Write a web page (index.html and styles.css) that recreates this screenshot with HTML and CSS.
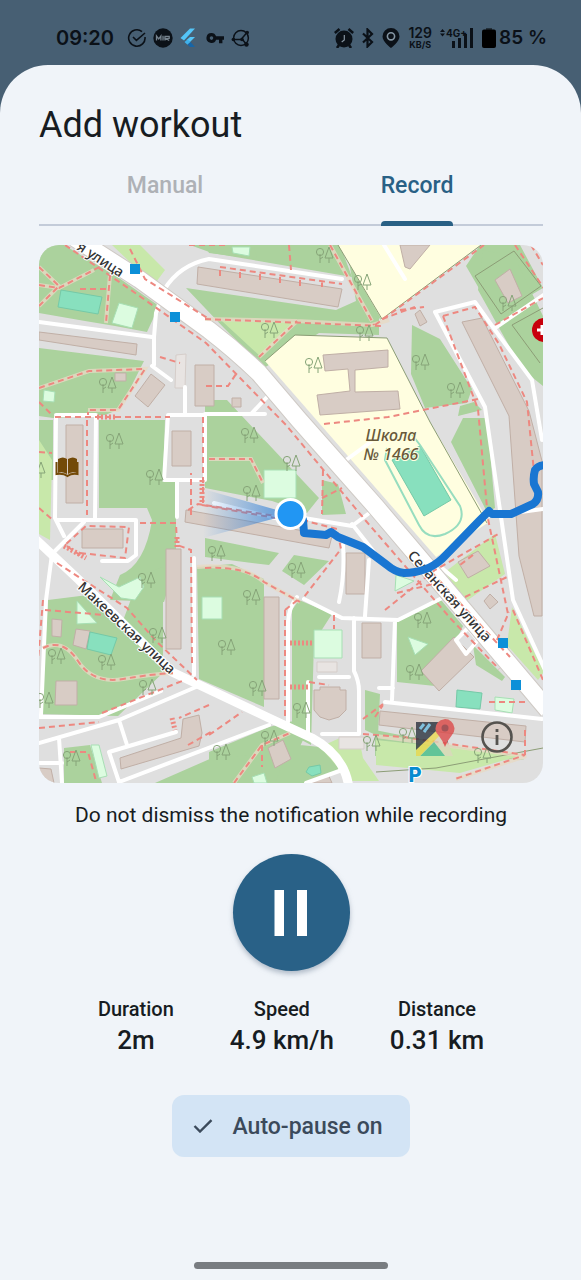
FILE: index.html
```html
<!DOCTYPE html>
<html lang="en">
<head>
<meta charset="utf-8">
<meta name="viewport" content="width=device-width, initial-scale=1">
<title>Add workout</title>
<link rel="stylesheet" href="styles.css">
</head>
<body>
<div class="screen">
  <header class="status">
    <div class="status-left">
      <span class="clock">09:20</span>
      <svg class="ico" viewBox="0 0 20 20"><path d="M15 3.600A8.200 8.200 0 1 0 18 9M6 9l3.400 3.400L18 5" fill="none" stroke="#0b1118" stroke-width="1.600"/></svg>
      <svg class="ico" viewBox="0 0 20 20"><circle cx="10" cy="10" r="9.7" fill="#0b1118"/><path d="M3.500 12.500V8l2.200 3 2.200-3v4.500M10 7.700v4.800M12 12.500V8.300h4.200v2H12.500l3.700 2.200" fill="none" stroke="#75828d" stroke-width="1.300"/></svg>
      <svg class="ico" viewBox="0 0 20 20"><path d="M11 .5h5L5 12.500 1.500 10z" fill="#54c5f8"/><path d="M11 9h5l-5 5-3.500-2z" fill="#54c5f8"/><path d="M5.500 14l3-2.500 3 2.500-3 2.800z" fill="#3fb2ec"/><path d="M8.500 16.800l3-2.800 4.500 5h-5z" fill="#1765a6"/></svg>
      <svg class="ico" viewBox="0 0 20 20"><path fill="#0b1118" fill-rule="evenodd" d="M6.500 5a5 5 0 0 1 4.600 3.300H19v3.500h-1.600v3.400h-3.400v-3.400h-2.900A5 5 0 1 1 6.500 5zm0 3.300a1.800 1.800 0 1 0 0 3.600 1.800 1.800 0 0 0 0-3.600z"/></svg>
      <svg class="ico" viewBox="0 0 20 20"><g fill="none" stroke="#0b1118" stroke-width="1.500"><circle cx="10" cy="10" r="7.400"/><path d="M2 11.500h8l6-7M11 11l5 6"/></g><g fill="#0b1118"><circle cx="2.400" cy="11.500" r="1.800"/><circle cx="16.200" cy="4.500" r="1.800"/><circle cx="15.500" cy="16.500" r="2.200"/><circle cx="11" cy="11.500" r="1.800"/></g></svg>
    </div>
    <div class="status-right">
      <svg class="ico" viewBox="0 0 20 20"><circle cx="10" cy="11" r="8.500" fill="#0b1118"/><path d="M.8 5L5.500 1M19.200 5L14.500 1M5 17l-2 3M15 17l2 3" stroke="#0b1118" stroke-width="2.600"/><path d="M10.300 7v5l-2.600 2" fill="none" stroke="#8795a1" stroke-width="1.200"/></svg>
      <svg class="ico thin" viewBox="0 0 12 20"><path d="M1 5.500l9 8.500-4.500 4.500v-17L10 6l-9 8.500" fill="none" stroke="#0b1118" stroke-width="2.200"/></svg>
      <svg class="ico pin" viewBox="0 0 18 20"><path fill="#0b1118" d="M9 0a8.500 8.500 0 0 1 8.500 8.500C17.500 14 9 20 9 20S.5 14 .5 8.500A8.500 8.500 0 0 1 9 0z"/><circle cx="9" cy="8.300" r="3.600" fill="none" stroke="#8495a3" stroke-width="1.600"/></svg>
      <span class="rate"><b>129</b><span>KB/S</span></span>
      <span class="net"><span>4G+</span><svg viewBox="0 0 34 20"><path fill="#0b1118" d="M0 4l2.500-3L5 4zM0 5.500l2.500 3 2.500-3zM12 13h3v7h-3zM18 10h3v10h-3zM24 6h3v14h-3zM30 0h3v20h-3z"/></svg></span>
      <svg class="ico batt" viewBox="0 0 14 20"><path d="M4 0h6v2H4z" fill="#24303a"/><rect y="1.500" width="14" height="18.500" rx="2"/></svg>
      <span class="pct">85 %</span>
    </div>
  </header>

  <main class="sheet">
    <h1>Add workout</h1>
    <div class="tabs" role="tablist">
      <button class="tab" role="tab" aria-selected="false"><span>Manual</span></button>
      <button class="tab active" role="tab" aria-selected="true"><span>Record</span></button>
    </div>

    <section class="map" aria-label="Workout map">
      <svg class="map-art" viewBox="39 245 504 538" preserveAspectRatio="xMidYMid slice">
        <defs>
          <g id="trees" class="tree"><circle cx="-4" cy="-3" r="3.600"/><path d="M-4-1v9M-4 4l3-2M5-8L1 3h8zM5 3v5"/></g>
          <linearGradient id="beam"><stop offset="0" stop-color="#2f80d8" stop-opacity="0"/><stop offset="1" stop-color="#2f80d8" stop-opacity=".8"/></linearGradient>
        </defs>
        <path class="land" d="M39 245h504v538H39z"/>
        <g class="green">
          <path d="M39 245h25l55 33 40 28-12 26-32-6-30-5-46-8zM190 245h150l12 32-140-24zM39 348l105 13-24 48-15 6-52 3-14-2z"/>
          <path d="M205 245h49l3 14-48-6zM186 288l150 22 20-9-10-56h20l13 20v70l-60-2-55 35-40-40zM361 245h8l12 75-20-20zM520 245h-40l-14 21 29 50 48-28z"/>
          <path d="M39 420h14v60H39zM99 420h66l-2 60 13 2v80l-12 40-54-2 10-25q25-10 32-55l-5-12H99zM205 400h22l92 98-12 15-35-12-67-13zM322 480l16 4 8 30-24 1zM412 325l28 14 32 50-5 14-42 5-14-34z"/>
          <path d="M483 250l31 6 29 60v70l-20-16-20-35-25-45zM451 442l12-24 24 0 8 90-8 4zM460 406l14-4 8 8-24 6z"/>
          <path d="M205 538l74 15-10 12-64-8zM294 555l35 6-25 24-22-14zM197 567l35-3 32 15v128l-65-28zM299 600l33 14-18 28-3 103-19-10V610zM140 575l23-8v90l-42-31zM48 600l40-5 80 73-50 48-77-2zM64 748l26-3 12 38H64zM209 752l60-25 24-6 10 19-20 43H209zM300 745l30 3 15 19-30 16h-34z"/>
          <path d="M397 622l44-22 22 26-28 60-38-4zM473 645l32 32-3 4-26-16zM155 783l57-25 75-5-12 30zM375 730l150 30-150-4zM365 690l15 4-2 42-13-6z"/>
        </g>
        <g class="grass">
          <path d="M112 245h28l25 25-11 15zM222 321l74 1-35 35zM39 440l13 20-2 80-11-6zM445 572l50-38 10 40-40 28zM512 607l32 65-6 8-31-35zM320 747l22-10 17 1 4 20 16 23h-29zM376 740l146 15-62 18-84-8z"/>
        </g>
        <g class="school">
          <path d="M338 245h143l-99 75zM265 361l30-26 92 3 43 84 59 100-53 35z"/>
        </g>
        <path class="fence" d="M338 245l44 74 99-74M295 335l92 3 43 84 57 101M265 361l30-26M475 276l39-25 27 35-40 28zM512 325l31-17M512 325l28 38M376 772l60-4 107-20"/>

        <g class="building">
          <path d="M198 267l144 22-4 18-141-23zM39 332l98 12-1 11-97-15zM151 374l14 11-17 22-13-11zM195 365h19v41h-19zM232 398h9v9h-9zM115 373h11v8h-11z"/>
          <path d="M323 355l65-5v17l-33 3v22l43-1 2 18-80 6-3-20 33-4-2-22-23 2zM400 245h30l-20 24-5-2zM420 310l7 12-7 4-5-12zM495 280l15-11 12 27-14 7zM462 322l20-4 47 93 13 50v155h-8l-15-60-10-140z"/>
          <path d="M66 425h17v78H66zM172 431h19v35h-19zM82 529h41v19H82zM186 510l146 26-3 12-144-26zM166 549h15v100h-15zM264 597h15v102h-15zM346 553h19v41h-19zM362 623h19v35h-19z"/>
          <path d="M458 562l20-11 12 15-22 12zM490 594l8 8-8 7-6-8zM52 619l10 1-1 17-9-1zM76 629l14 2-4 18-13-4zM56 681h21v24H55zM120 758l61-20 2-19 16-4 3 18-3 13-78 23zM268 748l15-8 8 19-16 9zM314 690h6v-3h20v3h6v20l-7 7-10 3-9-3-6-7zM454 637l20 20-35 34-18-20zM380 711l146 15-1 16-146-17zM39 768l12 1 3 14H39zM310 780l18-6 4 9h-22z"/>
        </g>
        <path class="shed" d="M176 355l10-1-1 34h-10zM317 662h20v10h-20zM339 737h25v12h-25z"/>
        <g class="pitch"><path d="M61 290l41 7-4 17-40-7zM392 460l28-14 31 54-27 16zM90 632l27 6-6 17-24-6zM457 690l25 3-2 16-24-2zM309 767l11-2 1 8-9 3-6-4z"/></g>
        <path class="track" d="M387 448l-2 12 34 65q8 16 26 9 22-10 15-28l-40-61-10-13"/>
        <g class="play"><path d="M119 303l19 5-6 20-20-5zM44 390l11 2-1 10-11-1zM264 470h32v28h-32zM202 597h20v22h-20zM314 630h28v28h-28zM100 577l19 10 21-10 4 10-9 13-14-2zM77 601l20 22-20 1zM408 637l20 7-13 11zM495 697l19 2-2 14-17-3zM91 745h8l8 31-8 2zM396 575l18 6-19 10zM232 247h18l-1 9-16-3zM252 777l12-4 3 10h-13z"/></g>

        <g class="road">
          <path d="M39 322l113 15M56 417l-1 101 9 18M56 415h40l-1 104M56 520h80v35l-8 6h-26M84 522l-32 32-6 46-5 115M152 366l19 14M154 365v-28l2-24 8-23q15-25 45-31l133 20M168 415h37v65h-41zM185 387v28M177 480v37M205 414h60"/>
          <path d="M39 743l80-23 77-33M39 717h60l62-26M119 720l8 25M176 732l-67 20 10 30 150-57M59 738l3 45M39 763h23M194 558v117M297 597q-8 10-9 25v100M304 599l38 19 56 2 44-22M354 618v53q5 10 5 20v43h-37M379 688h14M395 620l-3 80M319 677h30M308 682v56M385 702l157 17M342 770l-36 13M304 518l48 8 16-12M352 524l22 28M342 463l30-22M214 503l82 20M343 545q2 30-4 57M369 560l-4 56"/>
          <path d="M435 312l50 95 15 103 13 90 32 70M435 312l40-10 20 28 37 50 10 60M495 328l50-34M209 414h42l17-18M384 245l21 34M456 640l12-12 10 12-12 14zM442 568l14 12M490 516l53-7"/>
        </g>
        <path class="road major second" d="M30 534l49 46 93 92 97 46 43 20q33 18 37 50"/>
        <path class="casing" d="M75 238l64 41 70 51q26 20 50 43l40 47 77 87 79 93 93 110"/>
        <path class="main-road" d="M75 238l64 41 70 51q26 20 50 43l40 47 77 87 79 93 93 110"/>

        <g class="foot-casing"><path d="M39 267l20 19-20 20M39 285l20 3 35-18M110 275l-4 48M39 388l50-17 56-2-27 41H88M259 357l38-36 75 4 17-5M330 245l42 76M205 319l92 2M209 459h42l12 24M43 648q20-10 35 13t45 18 50-6M197 567q45-4 67 15l36 20M234 783l28-38 28-12M376 736l150 20-70 23"/></g>
        <g class="foot">
          <path d="M65 245l66 45 75 53 80 82 80 96 85 98 48 50M130 249l15 30 64 40M39 267l20 19-20 20M39 285l20 3 50-26M80 289h28M110 275l-4 48M39 388l50-17 56-2-27 41H88v5M55 417h115M160 357l20 6M39 402l14 14"/>
          <path d="M220 267l122 17M289 245l2 25M220 270v8M240 272v8M260 274v8M280 277v8M300 280v8M322 281v8M189 245h40M205 319l177 7M259 357l38-36M330 245l44 80M206 386l22 0 10-15M375 325l109-80M400 310l24-3M382 319l33-12M324 424l64-7 90-18M443 316l35 93 10 110 20 95M443 316l32-9 24 37 28 58 8 80M515 245l30 45M531 245l12 20M495 325l48-27"/>
          <path d="M87 420v95M39 452l13 1M39 508l15 13M80 553l45 5 4-31-43-1-21 19 18 12M140 523h36l1 22 14 5 1 113M191 515v-42M202 505l85 15M302 520l35 9 4 20-37 48M209 459h42l12 24M323 470l-1 44M322 498l20-10M205 568q40-2 59 14l36 20M188 510l10-6 110 17M203 417v90"/>
          <path d="M45 610l60 5M43 648q20-10 35 13t45 18 50-6M57 563l70 45 30 34 40 38M43 600l-5 60M285 610v110M285 610l15-12M102 713l80-32M39 728l60-6M209 705l-30 13M188 745l23-13M234 783l28-38 28-12M262 745v22M209 735l33-23M70 752h18l8 29M309 682l20 3M334 615v14M375 717l8-12M363 719l20-15M363 734l40 3 122 18-70 24M489 702h40M525 730v25M385 610l50-40 65-37M425 565l85 92M473 555l-13 10M465 597l42-20M397 593l40-10M513 610l30 70M497 640l12-28"/>
        </g>
        <g class="foot steps"><path d="M202 480v22M64 546l22 12M97 417h18M177 537v12M290 643h22M290 687h18M172 718l3 12"/></g>
        <g class="trees">
          <use href="#trees" x="107" y="385"/><use href="#trees" x="324" y="255"/><use href="#trees" x="362" y="282"/><use href="#trees" x="269" y="330"/><use href="#trees" x="364" y="333"/><use href="#trees" x="313" y="365"/><use href="#trees" x="420" y="362"/><use href="#trees" x="455" y="390"/><use href="#trees" x="507" y="303"/><use href="#trees" x="114" y="441"/><use href="#trees" x="154" y="477"/><use href="#trees" x="36" y="470"/><use href="#trees" x="146" y="580"/><use href="#trees" x="249" y="435"/><use href="#trees" x="291" y="463"/><use href="#trees" x="251" y="493"/><use href="#trees" x="216" y="553"/><use href="#trees" x="296" y="570"/><use href="#trees" x="251" y="597"/><use href="#trees" x="56" y="656"/><use href="#trees" x="106" y="662"/><use href="#trees" x="157" y="635"/><use href="#trees" x="44" y="700"/><use href="#trees" x="147" y="687"/><use href="#trees" x="71" y="758"/><use href="#trees" x="226" y="647"/><use href="#trees" x="257" y="688"/><use href="#trees" x="301" y="710"/><use href="#trees" x="269" y="738"/><use href="#trees" x="221" y="752"/><use href="#trees" x="371" y="743"/><use href="#trees" x="422" y="620"/><use href="#trees" x="414" y="672"/><use href="#trees" x="407" y="735"/><use href="#trees" x="482" y="755"/>
        </g>
        <path class="stop" d="M130 264h10v10h-10zM170 312h10v10h-10zM498 638h10v10h-10zM511 680h10v10h-10z"/>
        <g fill="#734a08"><path d="M58 459q5-3 9 0v15q-5-3-9-1zM68 459q5-3 9 0v14q-5-2-9 1z"/><path d="M56.500 462v12q7-1 11 2 4-3 10-2v-12" fill="none" stroke="#734a08" stroke-width="2"/></g>
        <circle cx="544" cy="330" r="12" fill="#c8000c"/><path d="M537 330h8M542 325v10" stroke="#fff" stroke-width="3"/>
        <g class="label">
          <text transform="translate(76 249) rotate(33)">я улица</text>
          <text transform="translate(77 588) rotate(43)">Макеевская улица</text>
          <text transform="translate(407 556) rotate(48)">Севанская улица</text>
          <g class="school-name"><text x="391" y="441">Школа</text><text x="391" y="460">№ 1466</text></g>
          <text class="parking" x="415" y="782">P</text>
        </g>
        <path d="M291 514L203 489v49z" fill="url(#beam)"/>
        <path class="route" d="M303 520l1 13 22 2 5-3 7 5 25 10 24 18q8 7 17 8 11 0 22-4 8-3 16-10l37-38L489 511l3 3h19l22-10q6-4 5-12l-4-8q-1-7 1-14 3-5 11-5"/>
        <circle cx="290.500" cy="514" r="14.500" fill="#2196f3" stroke="#fff" stroke-width="3"/>
      </svg>
      <div class="map-tools">
        <button class="map-btn" aria-label="Map source"><svg class="logo" viewBox="0 0 40 40"><g opacity=".76"><path d="M1 5h32v32H1z" fill="#222a38"/><path d="M3 39L28 14l10 25z" fill="#dcd7bf"/><path d="M5 39l14-14 11 14z" fill="#43b993"/><path d="M1 39v-6l20-19 4 4L5 39z" fill="#ead84a"/><path d="M5 12l4-5M9 15l6-8" stroke="#65bde5" stroke-width="3"/><path d="M30 30q-2-6-6-11a9.500 9.500 0 1 1 13-1q-5 6-7 12z" fill="#dc4444"/><circle cx="30" cy="11" r="3.500" fill="#922e35"/></g></svg></button>
        <button class="map-btn" aria-label="Map information"><svg class="info" viewBox="0 0 32 32"><circle cx="16" cy="16" r="14.500" fill="none" stroke="#55534f" stroke-width="2.600"/><path d="M16 14v10M16 8v3" stroke="#55534f" stroke-width="2.800"/></svg></button>
      </div>
    </section>

    <p class="hint">Do not dismiss the notification while recording</p>
    <button class="pause" aria-label="Pause recording"><svg viewBox="0 0 34 46"><path fill="#fff" d="M.500 0H10v46H.500zM23 0h10v46H23z"/></svg></button>
    <dl class="stats">
      <div><dt>Duration</dt><dd>2m</dd></div>
      <div><dt>Speed</dt><dd>4.9 km/h</dd></div>
      <div><dt>Distance</dt><dd>0.31 km</dd></div>
    </dl>
    <button class="chip" aria-pressed="true"><svg viewBox="0 0 20 14"><path d="M1.500 7l5.500 5.500L18.500 1.200" fill="none" stroke="#3b4a5b" stroke-width="2.400"/></svg>Auto-pause on</button>
    <div class="home-bar"></div>
  </main>
</div>
</body>
</html>
```
FILE: styles.css
```css
* { box-sizing: border-box; }
body { margin: 0; background: #475f73; font-family: Roboto, sans-serif; color: #171c22; }
button { border: 0; padding: 0; background: none; font: inherit; color: inherit; cursor: pointer; }
.screen { min-height: 100vh; display: flex; flex-direction: column; }
.status { height: 65px; padding: 10px 34px 0 56px; display: flex; align-items: center; justify-content: space-between; font-family: Inter, sans-serif; color: #0b1118; }
.status-left, .status-right { display: flex; align-items: center; gap: 6px; }
.status-right { gap: 8px; }
.clock { font-size: 20px; font-weight: 600; margin-right: 7px; }
.ico { width: 20px; height: 20px; display: block; }
.thin { width: 12px; }
.pin { width: 18px; }
.batt { width: 14px; }
.rate { display: flex; flex-direction: column; align-items: center; font-size: 9px; line-height: 10px; font-weight: 700; }
.rate b { font-size: 14px; line-height: 14px; font-weight: 600; }
.net { position: relative; }
.net svg { width: 34px; height: 20px; display: block; }
.net > span { position: absolute; left: 6px; top: 0; font-size: 10px; line-height: 10px; font-weight: 700; }
.pct { font-size: 19px; font-weight: 600; margin-left: -5px; }

.sheet { flex: 1; background: #f0f4f9; border-radius: 48px 48px 0 0; padding: 36px 38px 11px 39px; display: flex; flex-direction: column; align-items: center; }
h1 { margin: 0; align-self: stretch; font-size: 36px; line-height: 48px; font-weight: 400; }
.tabs { align-self: stretch; display: flex; border-bottom: 2px solid #c3cbd9; margin-bottom: 19px; height: 77px; }
.tab { flex: 1; display: flex; justify-content: center; font-size: 23px; line-height: 74px; font-weight: 500; color: #aeb1b6; }
.tab span { height: 77px; }
.tab.active { color: #296085; }
.tab.active span { display: flex; flex-direction: column; }
.tab.active span::after { content: ""; height: 5px; margin-top: -2px; background: #296085; border-radius: 4px 4px 0 0; }

.map { position: relative; align-self: stretch; aspect-ratio: 504 / 538; border-radius: 20px; overflow: hidden; }
.map-art { width: 100%; height: 100%; display: block; }
.map-tools { position: absolute; right: 30px; bottom: 26px; display: flex; align-items: center; gap: 26px; }
.map-btn { display: block; }
.map-btn svg { display: block; }
.logo { width: 40px; height: 40px; }
.info { width: 32px; height: 32px; }
.land { fill: #dfdfdf; }
.green { fill: #abd29d; }
.grass { fill: #c8e8aa; }
.school { fill: #fffee0; }
.fence { fill: none; stroke: #8c9d76; stroke-width: 1; }
.building { fill: #d8ccc5; stroke: #c0afa6; stroke-width: 1; }
.shed { fill: #e8e4e2; stroke: #d5cdc9; stroke-width: 1; }
.pitch { fill: #88e0be; stroke: #75c9a7; }
.track { fill: none; stroke: #97ddbf; stroke-width: 2; }
.play { fill: #dcfce0; stroke: #a7dfb4; }
.road { fill: none; stroke: #fff; stroke-width: 4; stroke-linejoin: round; stroke-linecap: round; }
.second { stroke-width: 9; }
.casing { fill: none; stroke: #cfcac5; stroke-width: 19; }
.main-road { fill: none; stroke: #fff; stroke-width: 17; }
.foot-casing { fill: none; stroke: #e7d9c4; stroke-width: 4; opacity: 0.8; }
.foot { fill: none; stroke: #ed8880; stroke-width: 2; stroke-dasharray: 6 4; }
.foot.steps { stroke-width: 5; stroke-dasharray: 2 2; }
.tree { fill: none; stroke: #86a478; stroke-width: 1; }
.stop { fill: #0c90d8; }
.label { font-family: "Noto Sans", sans-serif; font-size: 14px; font-weight: 500; fill: #333; stroke: #fff; stroke-width: 2px; paint-order: stroke; }
.label .school-name { font-size: 16px; font-style: italic; text-anchor: middle; fill: #68593a; stroke: #fffee0; }
.label .parking { font-family: Inter, sans-serif; font-size: 20px; font-weight: 800; text-anchor: middle; fill: #078bd0; }
.route { fill: none; stroke: #1976d2; stroke-width: 8; stroke-linejoin: round; stroke-linecap: round; }

.hint { margin: 20px 0 26px; font-size: 21px; line-height: 25px; text-align: center; }
.pause { width: 117px; height: 117px; border-radius: 50%; background: #296187; display: grid; place-items: center; box-shadow: 0 3px 5px #8796a899; }
.pause svg { width: 34px; height: 46px; }
.stats { margin: 24px 0 38px; display: flex; justify-content: center; gap: 56px; text-align: center; font-weight: 500; }
dt { font-size: 20px; line-height: 28px; }
dd { margin: 0; font-size: 26px; line-height: 34px; }
.chip { display: flex; align-items: center; gap: 19px; height: 62px; padding: 0 27px 0 21px; border-radius: 12px; background: #d3e4f5; color: #3b4a5b; font-size: 23px; font-weight: 500; }
.chip svg { width: 20px; height: 14px; }
.home-bar { width: 194px; height: 7px; border-radius: 4px; background: #787c81; margin-top: auto; }
```
